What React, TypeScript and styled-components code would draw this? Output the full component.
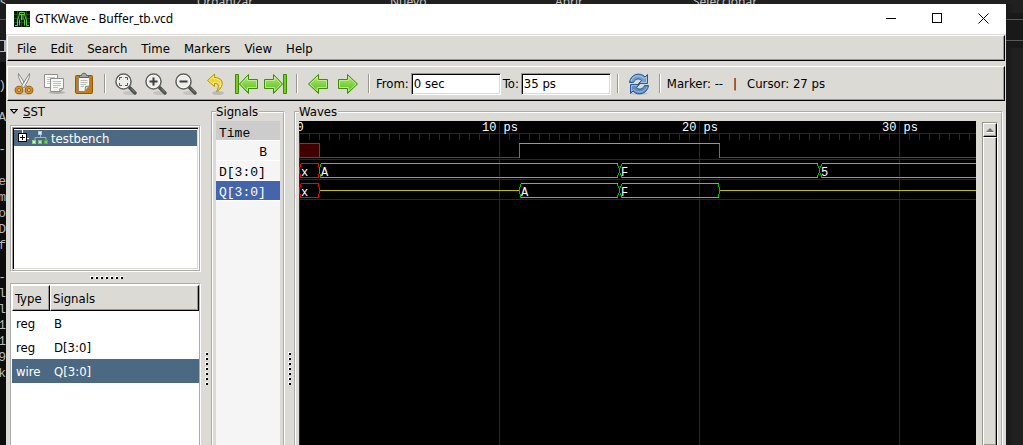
import React from "react";
import styled, { createGlobalStyle, css } from "styled-components";

const face = "#dcdad5";
const shade = "#9a988f";
const selected = "#4b6983";
const ui = `"DejaVu Sans Condensed", "Noto Sans", sans-serif`;
const mono = `"Liberation Mono", monospace`;

const GlobalStyle = createGlobalStyle`
  * { box-sizing: border-box; }
  body { margin: 0; background: #0c0c0c; overflow: hidden; font: 13px/18px ${ui}; color: #000; }
  button { font: inherit; color: inherit; background: none; border: 0; padding: 0; margin: 0; }
  svg { display: block; flex: none; }
`;

/* ---------- desktop behind the window ---------- */

const Desktop = styled.div`
  height: 100vh;
  display: flex;
  flex-direction: column;
  overflow: hidden;
  background: #0c0c0c;
`;

const TopStrip = styled.div`
  height: 4px;
  flex: none;
  overflow: hidden;
  display: grid;
  grid-template-columns: 197px 193px 165px 138px 1fr;
  background: #202020;
  color: #c4c4c4;
  font: 12px/16px "Noto Sans", sans-serif;
  span { margin-top: -6px; }
`;

const Middle = styled.div`
  flex: 1;
  min-height: 0;
  display: flex;
`;

const LeftStrip = styled.div`
  width: 6px;
  flex: none;
  overflow: hidden;
  background: #0c0c0c;
  color: #b8b8b8;
  font: 13px/16px ${mono};
  display: flex;
  flex-direction: column;
  align-items: flex-end;
  white-space: pre;
  span { height: 16px; flex: none; }
`;

const StripHead = styled.div`
  width: 100%;
  height: 58px;
  flex: none;
  padding-top: 15px;
  background: #1c1c1c;
`;

const StripBox = styled.div`
  margin-top: 20px;
  height: 12px;
  border: solid #b0b4c4;
  border-width: 1px 2px 1px 0;
`;

const StripLine = styled.div`
  height: 1px;
  background: #5a5a5a;
`;

const RightStrip = styled.div`
  width: 17px;
  flex: none;
  background: linear-gradient(90deg, #181818, #202020 8px);
`;

const RightBand = styled.div`
  margin-top: 9px;
  height: 35px;
  padding: 6px 0 7px;
  background: #191919;
  display: flex;
  flex-direction: column;
  justify-content: space-between;
`;

/* ---------- window ---------- */

const Window = styled.main`
  flex: 1;
  min-width: 0;
  display: flex;
  flex-direction: column;
  background: ${face};
`;

const TitleBar = styled.header`
  height: 30px;
  flex: none;
  display: flex;
  align-items: center;
  padding-left: 8px;
  gap: 5px;
  background: #fff;
  margin-bottom: 1px;
`;

const Title = styled.h1`
  flex: 1;
  margin: 0;
  font: 12px/16px "Noto Sans", sans-serif;
`;

const CaptionButtons = styled.div`
  display: flex;
  align-self: stretch;
`;

const CaptionButton = styled.button`
  width: 46px;
  display: flex;
  align-items: center;
  justify-content: center;
`;

const raised = css`
  border: 1px solid;
  border-color: #fff #000 #000 #fff;
  box-shadow: inset -1px -1px 0 ${shade};
`;

const MenuBar = styled.nav`
  ${raised}
  height: 26px;
  flex: none;
  margin: 0 1px 5px;
  padding: 2px 0 0 2px;
  display: flex;
  align-items: center;
`;

const MenuItem = styled.button`
  padding: 0 7px;
`;

const ToolBar = styled.div`
  ${raised}
  height: 35px;
  flex: none;
  margin: 0 1px;
  padding-left: 1px;
  display: flex;
  align-items: center;
  white-space: nowrap;
`;

const ToolButton = styled.button`
  width: 30px;
  height: 30px;
  flex: none;
  display: flex;
  align-items: center;
  justify-content: center;
`;

const Separator = styled.div`
  width: 2px;
  height: 19px;
  flex: none;
  margin: 0 5px;
  background: ${shade};
  border-right: 1px solid #fff;
`;

const Field = styled.label`
  display: flex;
  align-items: center;
  margin: 0 1px;
  gap: 2px;
`;

const TextBox = styled.input`
  width: 90px;
  height: 22px;
  padding: 0 2px;
  font: inherit;
  color: #000;
  background: #fff;
  border: 1px solid;
  border-color: ${shade} #fff #fff ${shade};
  border-radius: 0;
  box-shadow: inset 1px 1px 0 #000, inset -1px -1px 0 ${face};
  outline: 0;
`;

const Status = styled.output`
  display: flex;
  gap: 10px;
  margin-left: 1px;
`;

/* ---------- panes ---------- */

const Panes = styled.div`
  flex: 1;
  min-height: 0;
  display: flex;
  padding: 2px 3px 0 4px;
`;

const LeftPane = styled.section`
  width: 192px;
  flex: none;
  display: flex;
  flex-direction: column;
  padding-right: 1px;
`;

const Expander = styled.button`
  display: flex;
  align-items: center;
  gap: 5px;
  height: 18px;
  margin-bottom: 4px;
`;

const Etched = styled.div<{ $grow?: boolean }>`
  border: 2px groove #fff;
  background: #fff;
  ${(p) => (p.$grow ? "flex: 1; min-height: 0; border-bottom: 0;" : "height: 147px; flex: none;")}
`;

const TreeView = styled.div`
  height: 100%;
  padding: 2px 1px 1px;
  border: 1px solid;
  border-color: ${shade} #fff #fff ${shade};
  box-shadow: inset 1px 1px 0 #000, inset -1px -1px 0 ${face};
`;

const TreeRow = styled.button`
  width: 100%;
  height: 16px;
  display: flex;
  align-items: center;
  background: ${selected};
  color: #fff;
  line-height: 16px;
  padding-left: 4px;
  gap: 3px;
`;

const TreeLabel = styled.span`
  padding-top: 2px;
`;

const Splitter = styled.div<{ $vertical?: boolean }>`
  flex: none;
  display: flex;
  align-items: center;
  gap: 2px;
  ${(p) =>
    p.$vertical
      ? "width: 9px; flex-direction: column; padding-top: 249px;"
      : "height: 11px; justify-content: center; padding-left: 2px;"}
`;

const Dot = styled.i`
  width: 3px;
  height: 3px;
  background: #000;
  border: solid #fff;
  border-width: 1px 0 0 1px;
`;

const SignalTable = styled.table`
  width: 100%;
  border-collapse: separate;
  border-spacing: 0;
  text-align: left;
  th {
    ${raised}
    height: 26px;
    padding: 2px 0 0 2px;
    font-weight: normal;
    background: ${face};
  }
  th:first-child { width: 38px; }
  td { height: 24px; padding: 2px 4px 0; }
`;

const SignalRow = styled.tr<{ $selected: boolean }>`
  ${(p) => p.$selected && `background: ${selected}; color: #fff;`}
`;

const Frame = styled.fieldset<{ $width?: number }>`
  ${(p) => (p.$width ? `width: ${p.$width}px; flex: none;` : "flex: 1;")}
  min-width: 0;
  margin: 0;
  padding: 0 3px;
  border: 2px groove #fff;
  border-bottom: 0;
  display: flex;
`;

const Legend = styled.legend`
  padding: 0 1px 0 0;
  height: 18px;
`;

const NameList = styled.ul`
  flex: 1;
  margin: 0;
  padding: 0;
  list-style: none;
  background: #f5f5f5;
  font: 13px/16px ${mono};
`;

const Name = styled.li<{ $kind?: "head" | "right" | "selected" }>`
  height: 20px;
  padding: 4px 13px 0 3px;
  border-bottom: 1px solid #fff;
  ${(p) => p.$kind === "head" && "background: #ccc; padding-top: 5px;"}
  ${(p) => p.$kind === "right" && "text-align: right;"}
  ${(p) => p.$kind === "selected" && "background: #4464ac; color: #fff;"}
`;

const WaveArea = styled.div`
  flex: 1;
  min-width: 0;
  overflow: hidden;
  background: #000;
`;

const ScrollBar = styled.div`
  width: 16px;
  flex: none;
  margin: 1px 0 0 6px;
  display: flex;
  flex-direction: column;
  border: 1px solid;
  border-color: ${shade} #fff #fff ${shade};
  border-bottom: 0;
`;

const ScrollButton = styled.button`
  ${raised}
  height: 14px;
  display: flex;
  align-items: center;
  justify-content: center;
`;

const Thumb = styled.div`
  ${raised}
  flex: 1;
  border-bottom: 0;
`;

/* ---------- waveform drawing ---------- */

const PX = 20;
const END = 100;
const GRID = "#20206e";
const LIME = "#00ff00";
const GREEN = "#00c000";
const YELLOW = "#c0c000";

type Span = { from: number; to: number; value: string };

const busD: Span[] = [
  { from: 0, to: 1, value: "x" },
  { from: 1, to: 16, value: "A" },
  { from: 16, to: 26, value: "F" },
  { from: 26, to: END, value: "5" },
];
const busQ: Span[] = [
  { from: 0, to: 1, value: "x" },
  { from: 1, to: 11, value: "z" },
  { from: 11, to: 16, value: "A" },
  { from: 16, to: 21, value: "F" },
  { from: 21, to: END, value: "z" },
];

const isBus = (s?: Span) => !!s && s.value !== "z" && s.value !== "x";

function Bus({ spans, top }: { spans: Span[]; top: number }) {
  const t = top + 0.5;
  const m = top + 7.5;
  const e = top + 14.5;
  return (
    <g fill="none">
      {spans.map((s, i) => {
        const a = s.from * PX + 0.5;
        const b = s.to * PX + 0.5;
        if (s.value === "z") return <path key={i} d={`M${a} ${m}H${b}`} stroke={YELLOW} />;
        const red = s.value === "x";
        const l = a + (isBus(spans[i - 1]) ? 2 : 1);
        const r = b - (isBus(spans[i + 1]) && !red ? 2 : 1);
        return (
          <g key={i}>
            <path
              d={`M${l} ${t}V${t + 2}L${a} ${m - 2}V${m + 2}L${l} ${e - 2}V${e}M${r} ${t}V${t + 2}L${b} ${m - 2}V${m + 2}L${r} ${e - 2}V${e}`}
              stroke={red ? "#ff0000" : GREEN}
            />
            <path d={`M${l} ${t}H${r}M${l} ${e}H${r}`} stroke={red ? "#ff0000" : LIME} />
            <text x={a + 1.5} y={top + 13} fill="#fff">{s.value}</text>
          </g>
        );
      })}
    </g>
  );
}

function Waves() {
  const ticks = Array.from({ length: END * 2 }, (_, i) => `M${i * 10 + 0.5} 12V19`).join("");
  const tens = Array.from({ length: END / 10 + 1 }, (_, i) => i * 10);
  return (
    <svg width="100%" height="100%" shapeRendering="crispEdges" fontFamily={mono} fontSize="12" role="img" aria-label="Waves">
      <path d={ticks + `M0 12.5H${END * PX}M0 38.5H${END * PX}M0 58.5H${END * PX}M0 78.5H${END * PX}`} stroke={GRID} />
      {tens.map((t) => (
        <g key={t}>
          <path d={`M${t * PX + 0.5} ${t ? 0 : 12}V2000`} stroke={GRID} />
          <text x={t * PX + 1} y="10" fill="#fff" textAnchor="middle">{t ? `${t} ps` : "0"}</text>
        </g>
      ))}
      <rect x="0.5" y="22.5" width="20" height="14" fill="#400000" stroke="#ff0000" />
      <path d={`M21 36.5H220M421 36.5H${END * PX}`} stroke="#008000" />
      <path d="M220.5 37V22M420.5 37V22" stroke={GREEN} />
      <path d="M220 22.5H421" stroke={LIME} />
      <Bus spans={busD} top={42} />
      <Bus spans={busQ} top={62} />
    </svg>
  );
}

/* ---------- icons ---------- */

const AppIcon = () => (
  <svg width="16" height="16" viewBox="0 0 16 16">
    <rect width="16" height="16" fill="#061806" />
    <path d="M0 3.5H16M0 7.5H16M0 11.5H16M3.5 0V16M7.5 0V16M12.5 0V16" stroke="#17501a" />
    <path d="M1 14.5H3.5V9L5.5 3.5V1.5H10.5V3.5L12.5 9V14.5H15M5.5 14.5V8.5M10.5 14.5V8.5M7.5 4V9M9 4V9M5.5 3.5H10.5" fill="none" stroke="#63c83a" />
  </svg>
);

const CutIcon = () => (
  <svg width="24" height="24" viewBox="0 0 24 24">
    <ellipse cx="12" cy="21" rx="9" ry="2" fill="#000" opacity=".1" />
    <path d="M6.500 1.500C5.500 5 9 11 12.500 15.500L14.500 14Z" fill="#f4f4f2" stroke="#888a85" />
    <path d="M17.500 1.500C18.500 5 15 11 11.500 15.500L9.500 14Z" fill="#eeeeec" stroke="#888a85" />
    <ellipse cx="7" cy="18" rx="2.700" ry="2.600" fill="none" stroke="#8f5902" strokeWidth="3.400" />
    <ellipse cx="17" cy="18" rx="2.700" ry="2.600" fill="none" stroke="#8f5902" strokeWidth="3.400" />
    <ellipse cx="7" cy="18" rx="2.700" ry="2.600" fill="none" stroke="#d9902a" strokeWidth="1.600" />
    <ellipse cx="17" cy="18" rx="2.700" ry="2.600" fill="none" stroke="#d9902a" strokeWidth="1.600" />
  </svg>
);

const CopyIcon = () => (
  <svg width="24" height="24" viewBox="0 0 24 24">
    <path d="M2.500 2.500H15.500V15.500H2.500Z" fill="#fafafa" stroke="#8f918c" />
    <path d="M5 5.500H13M5 7.500H13M5 9.500H13M5 11.500H9" stroke="#c4c4c0" />
    <ellipse cx="15" cy="20.500" rx="8" ry="1.500" fill="#000" opacity=".2" />
    <path d="M8.500 6.500H21.500V16.500L18 19.500H8.500Z" fill="#f6f6f5" stroke="#8f918c" />
    <path d="M11 9.500H19M11 11.500H19M11 13.500H19M11 15.500H16" stroke="#c0c0bc" />
    <path d="M17.500 19.500L18 16.500L21.500 16.500Z" fill="#fff" stroke="#8f918c" />
  </svg>
);

const PasteIcon = () => (
  <svg width="24" height="24" viewBox="0 0 24 24">
    <rect x="3.500" y="3.500" width="17" height="18" rx="1" fill="#c17d11" stroke="#8f5902" />
    <path d="M6.500 5.500H17.500V14L13 19.500H6.500Z" fill="#f5f5f4" stroke="#888a85" />
    <path d="M13 19L13.500 14.500L17.500 14Z" fill="#d0d0cc" stroke="#888a85" />
    <path d="M8.500 8.500H15.500M8.500 10.500H15.500M8.500 12.500H14M8.500 14.500H12" stroke="#babdb6" />
    <path d="M7.500 5.500V3.500H9.500C9.500 .500 14.500 .500 14.500 3.500H16.500V5.500Z" fill="#a3a59f" stroke="#5f615c" />
  </svg>
);

const ZoomIcon = ({ children }: { children: React.ReactNode }) => (
  <svg width="24" height="24" viewBox="0 0 24 24" fill="none">
    <ellipse cx="16" cy="21" rx="7" ry="2" fill="#000" opacity=".1" />
    <path d="M15.500 15.500L21 21" stroke="#4b4d49" strokeWidth="3.400" strokeLinecap="round" />
    <path d="M17 16.500L21 20.500" stroke="#8a8c87" strokeWidth="1" />
    <circle cx="9.500" cy="9.500" r="7.500" fill="#ecece9" stroke="#62645f" strokeWidth="1.600" />
    <circle cx="9.500" cy="9.500" r="6.200" stroke="#fff" />
    {children}
  </svg>
);

const UndoIcon = () => (
  <svg width="24" height="24" viewBox="0 0 24 24">
    <ellipse cx="14" cy="21" rx="6" ry="2" fill="#000" opacity=".15" />
    <path d="M10.500 2L3.500 8.500L10.500 14.500V11.500C14.500 11 15.500 14 12.500 19.500C20 16 21 5.500 10.500 5.500Z" fill="#edd435" stroke="#b89706" strokeLinejoin="round" />
    <path d="M9.500 4.500L5 8.500L9.500 12.300V10.500C14 9.500 17 11 16 15C18.500 10 15.500 6.500 9.500 6.700Z" fill="none" stroke="#fbf0a0" strokeWidth=".7" />
  </svg>
);

const GreenArrow = ({ right, bar }: { right?: boolean; bar?: boolean }) => (
  <svg width="26" height="24" viewBox="0 0 26 24">
    <defs>
      <linearGradient id="leaf" x1="0" y1="0" x2="0" y2="1">
        <stop offset="0" stopColor="#b4ec7a" />
        <stop offset="1" stopColor="#55b816" />
      </linearGradient>
    </defs>
    <g transform={right ? "translate(26 0) scale(-1 1)" : undefined} strokeLinejoin="round">
      {bar && <rect x="2.500" y="2.500" width="3" height="19" fill="#73d216" stroke="#3c8c05" />}
      <path
        d={bar ? "M15.500 2.500L6.500 12L15.500 21.500V16.500H24.500V7.500H15.500Z" : "M13.500 2.500L3.500 12L13.500 21.500V16.500H22.500V7.500H13.500Z"}
        fill="url(#leaf)"
        stroke="#3c8c05"
      />
      <path
        d={bar ? "M14.500 5.200L8 12L14.500 18.800V15.500H23.500V8.500H14.500Z" : "M12.500 5L5 12L12.500 19V15.500H21.500V8.500H12.500Z"}
        fill="none"
        stroke="#c8f29c"
        opacity=".8"
      />
    </g>
  </svg>
);

const ReloadIcon = () => (
  <svg width="24" height="24" viewBox="0 0 24 24" strokeLinejoin="round">
    <ellipse cx="12" cy="21.500" rx="9" ry="1.500" fill="#000" opacity=".1" />
    <path d="M2.500 10.500C3.500 2 13 -.500 18 5L20.500 2.500V11.500H11.500L14.500 8.500C11.500 5.500 8 7 6.500 10.500Z" fill="#729fcf" stroke="#2c5590" />
    <path d="M4 9C6 3.500 12.500 2 17 6.500L19.500 5V10.500H14" fill="none" stroke="#b8d0ec" strokeWidth=".8" />
    <path d="M21.500 13.500C20.500 22 11 24.500 6 19L3.500 21.500V12.500H12.500L9.500 15.500C12.500 18.500 16 17 17.500 13.500Z" fill="#5b8cc4" stroke="#2c5590" />
    <path d="M20 14.500C18 20.500 11 21.500 6.500 17.500L4.500 19V13.500H10" fill="none" stroke="#a8c4e6" strokeWidth=".8" />
  </svg>
);

const ExpandBox = () => (
  <svg width="11" height="16" viewBox="0 0 11 16">
    <path d="M4.500 0V3M9 8.500H11" stroke="#fff" />
    <rect x="0.500" y="3.500" width="8" height="8" fill="#fff" stroke="#000" />
    <path d="M2 7.500H7M4.500 5V10" stroke="#000" />
  </svg>
);

const ModuleIcon = () => (
  <svg width="16" height="16" viewBox="0 0 16 16">
    <path d="M8.500 5V8M3 10V7.500H14V10" fill="none" stroke="#9fb0bf" />
    <rect x="6" y="1" width="4" height="4" fill="#a9c8f0" />
    <rect x="7" y="2" width="2" height="2" fill="#e2eefc" />
    <rect x="0" y="10" width="4" height="4" fill="#8fd080" />
    <rect x="1" y="11" width="2" height="2" fill="#d4f2cc" />
    <rect x="6" y="10" width="4" height="4" fill="#78c468" />
    <rect x="7" y="11" width="2" height="2" fill="#b8e6ac" />
    <rect x="12" y="10" width="4" height="4" fill="#4caf3c" />
    <rect x="13" y="11" width="2" height="2" fill="#80d070" />
  </svg>
);

const Dots = () => (
  <>
    {Array.from({ length: 7 }, (_, i) => (
      <Dot key={i} />
    ))}
  </>
);

const consoleTail = ["", ")", "", "A", "", "-", "", "e", "m", "o", "D", "f", "", "-", "l", "l", "1", "1", "9", "k"];
const signals = [
  ["reg", "B"],
  ["reg", "D[3:0]"],
  ["wire", "Q[3:0]"],
];

export default function App() {
  return (
    <Desktop>
      <GlobalStyle />
      <TopStrip>
        <span>s</span>
        <span>Organizar</span>
        <span>Nuevo</span>
        <span>Abrir</span>
        <span>Seleccionar</span>
      </TopStrip>
      <Middle>
        <LeftStrip>
          <StripHead>
            <StripLine />
            <StripBox />
          </StripHead>
          {consoleTail.map((t, i) => (
            <span key={i}>{t}</span>
          ))}
        </LeftStrip>
        <Window>
          <TitleBar>
            <AppIcon />
            <Title>GTKWave - Buffer_tb.vcd</Title>
            <CaptionButtons>
              <CaptionButton aria-label="Minimize">
                <svg width="11" height="11"><path d="M0 4.500H10" stroke="#000" /></svg>
              </CaptionButton>
              <CaptionButton aria-label="Maximize">
                <svg width="10" height="12"><rect x=".5" y=".5" width="9" height="9" fill="none" stroke="#000" /></svg>
              </CaptionButton>
              <CaptionButton aria-label="Close">
                <svg width="11" height="12"><path d="M.500 .500L10.500 10.500M10.500 .500L.500 10.500" stroke="#000" /></svg>
              </CaptionButton>
            </CaptionButtons>
          </TitleBar>
          <MenuBar>
            {["File", "Edit", "Search", "Time", "Markers", "View", "Help"].map((m) => (
              <MenuItem key={m}>{m}</MenuItem>
            ))}
          </MenuBar>
          <ToolBar>
            <ToolButton aria-label="Cut"><CutIcon /></ToolButton>
            <ToolButton aria-label="Copy"><CopyIcon /></ToolButton>
            <ToolButton aria-label="Paste"><PasteIcon /></ToolButton>
            <Separator />
            <ToolButton aria-label="Zoom fit">
              <ZoomIcon>
                <path d="M5.500 8V5.500H8M11 5.500H13.500V8M13.500 11V13.500H11M8 13.500H5.500V11" stroke="#555753" />
              </ZoomIcon>
            </ToolButton>
            <ToolButton aria-label="Zoom in">
              <ZoomIcon><path d="M5.500 9.500H13.500M9.500 5.500V13.500" stroke="#3c3e3a" strokeWidth="2" /></ZoomIcon>
            </ToolButton>
            <ToolButton aria-label="Zoom out">
              <ZoomIcon><path d="M5.500 9.500H13.500" stroke="#3c3e3a" strokeWidth="2" /></ZoomIcon>
            </ToolButton>
            <ToolButton aria-label="Zoom undo"><UndoIcon /></ToolButton>
            <ToolButton aria-label="Go to start"><GreenArrow bar /></ToolButton>
            <ToolButton aria-label="Go to end"><GreenArrow bar right /></ToolButton>
            <Separator />
            <ToolButton aria-label="Previous edge"><GreenArrow /></ToolButton>
            <ToolButton aria-label="Next edge"><GreenArrow right /></ToolButton>
            <Separator />
            <Field>From:<TextBox defaultValue="0 sec" /></Field>
            <Field>To:<TextBox defaultValue="35 ps" /></Field>
            <Separator />
            <ToolButton aria-label="Reload"><ReloadIcon /></ToolButton>
            <Separator />
            <Status>
              <span>Marker: --</span>
              <span>|</span>
              <span>Cursor: 27 ps</span>
            </Status>
          </ToolBar>
          <Panes>
            <LeftPane>
              <Expander aria-expanded="true">
                <svg width="8" height="8"><path d="M.800 1.500H7.200L4 5.200Z" fill="#fff" stroke="#000" strokeWidth="1.200" /></svg>
                <span><u>S</u>ST</span>
              </Expander>
              <Etched>
                <TreeView>
                  <TreeRow>
                    <ExpandBox />
                    <ModuleIcon />
                    <TreeLabel>testbench</TreeLabel>
                  </TreeRow>
                </TreeView>
              </Etched>
              <Splitter><Dots /></Splitter>
              <Etched $grow>
                <SignalTable>
                  <thead>
                    <tr><th>Type</th><th>Signals</th></tr>
                  </thead>
                  <tbody>
                    {signals.map(([type, name]) => (
                      <SignalRow key={name} $selected={type === "wire"}>
                        <td>{type}</td>
                        <td>{name}</td>
                      </SignalRow>
                    ))}
                  </tbody>
                </SignalTable>
              </Etched>
            </LeftPane>
            <Splitter $vertical><Dots /></Splitter>
            <Frame $width={74}>
              <Legend>Signals</Legend>
              <NameList>
                <Name $kind="head">Time</Name>
                <Name $kind="right">B</Name>
                <Name>D[3:0]</Name>
                <Name $kind="selected">Q[3:0]</Name>
              </NameList>
            </Frame>
            <Splitter $vertical><Dots /></Splitter>
            <Frame>
              <Legend>Waves</Legend>
              <WaveArea><Waves /></WaveArea>
              <ScrollBar>
                <ScrollButton aria-label="Scroll up">
                  <svg width="8" height="5"><path d="M0 4L4 0L8 4Z" fill="#77756f" /><path d="M0 4.500H8" stroke="#fff" /></svg>
                </ScrollButton>
                <Thumb />
              </ScrollBar>
            </Frame>
          </Panes>
        </Window>
        <RightStrip>
          <RightBand>
            <StripLine />
            <StripLine />
          </RightBand>
        </RightStrip>
      </Middle>
    </Desktop>
  );
}
